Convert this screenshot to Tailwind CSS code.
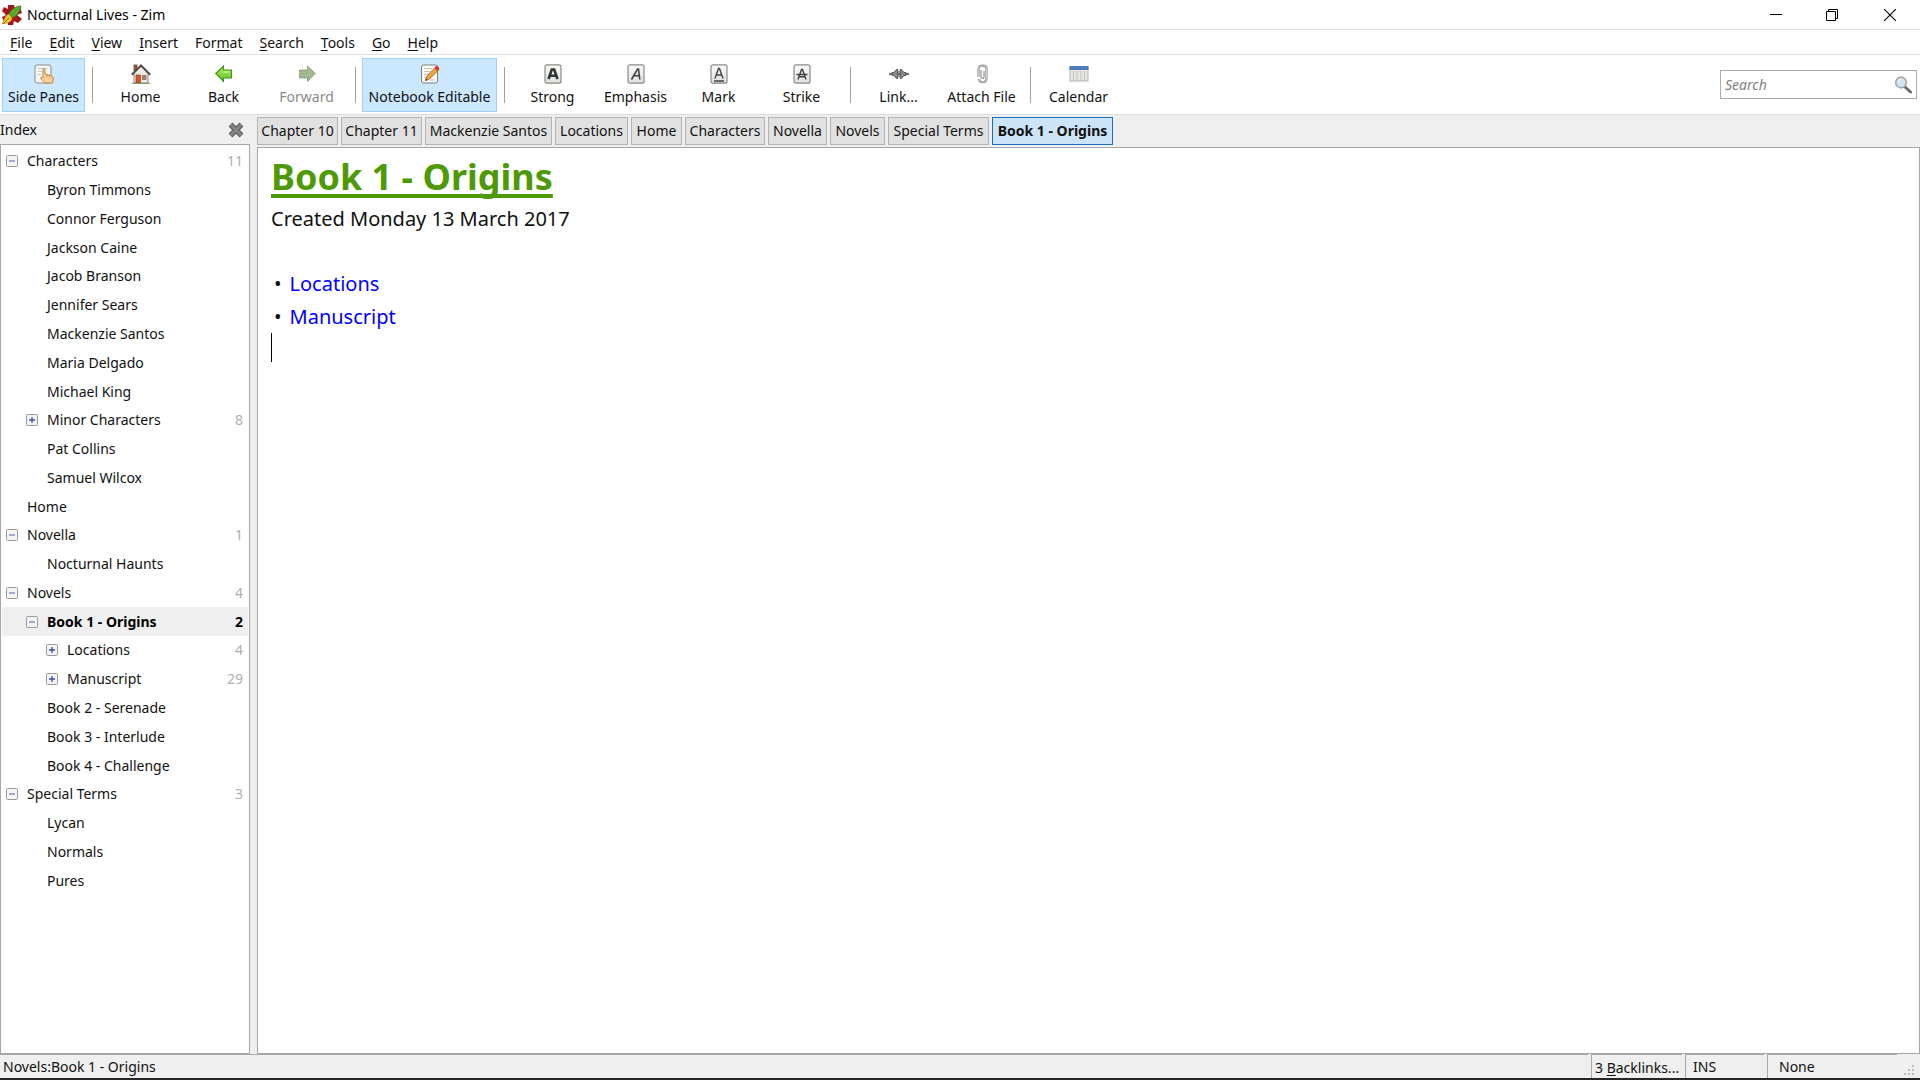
<!DOCTYPE html>
<html lang="en">
<head>
<meta charset="utf-8">
<title>Nocturnal Lives - Zim</title>
<script src="https://cdn.jsdelivr.net/npm/@tailwindcss/browser@4"></script>
</head>
<body class="h-screen flex flex-col overflow-hidden bg-[#efefef] font-['Noto_Sans','Open_Sans',sans-serif] text-sm leading-5 text-[#111]">

<svg class="absolute size-0" aria-hidden="true">
  <defs>
    <linearGradient id="key" x1="0" y1="0" x2="0" y2="1"><stop offset="0" stop-color="#fafaf8"/><stop offset="1" stop-color="#dededa"/></linearGradient>
    <linearGradient id="grn" x1="0" y1="0" x2="0" y2="1"><stop offset="0" stop-color="#b5ec72"/><stop offset="1" stop-color="#5cc01c"/></linearGradient>
    <symbol id="minus" viewBox="0 0 12 12"><rect x=".5" y=".5" width="11" height="11" rx="1" fill="#f4f4f4" stroke="#9a9a9a"/><path d="M3 6h6" stroke="#4a5fa8"/></symbol>
    <symbol id="plus" viewBox="0 0 12 12"><rect x=".5" y=".5" width="11" height="11" rx="1" fill="#f4f4f4" stroke="#9a9a9a"/><path d="M3 6h6M6 3v6" stroke="#3a50a8" stroke-width="1.300"/></symbol>
  </defs>
</svg>

<header class="h-[30px] shrink-0 flex items-center bg-white border-b border-[#dedede] pl-0.5">
  <svg class="size-5" viewBox="0 0 20 20"><path d="M6 0h6l1 4 5-2 2 6-5 2 5 4-4 4-4-2-1 4H6l0-4-4 1-2-5 4-2-4-4 2-4 4 2z" fill="#a8141c"/><path d="M19 1c-5 0-10 3-12 8l3 4c5-2 8-6 9-12z" fill="#58a82c" stroke="#33701a" stroke-width=".7"/><path d="M7 9c-3 1-4 3-5 6l-2 4 5-1c3-1 5-2 5-5z" fill="#f2c92c" stroke="#b08a10" stroke-width=".6"/><path d="M1 19l6-6" stroke="#8c6b10"/></svg>
  <h1 class="ml-[5px] text-black">Nocturnal Lives - Zim</h1>
  <div class="ml-auto flex">
    <button aria-label="Minimize" class="w-[56px] h-7 grid place-items-center"><svg class="size-3" viewBox="0 0 12 12"><path d="M0 5.5h12" stroke="#000"/></svg></button>
    <button aria-label="Restore" class="w-[56px] h-7 grid place-items-center"><svg class="size-3" viewBox="0 0 12 12" fill="none" stroke="#000"><path d="M.5 2.500h9v9h-9zM2.500 2.500v-2h9v9h-2"/></svg></button>
    <button aria-label="Close" class="w-[60px] h-7 grid place-items-center"><svg class="size-3" viewBox="0 0 12 12"><path d="M0 0l12 12M12 0L0 12" stroke="#000" stroke-width="1.100"/></svg></button>
  </div>
</header>

<nav class="h-[25px] shrink-0 flex items-center gap-[17px] bg-white border-b border-[#dedede] pl-[10px] pt-0.5">
  <button><u class="underline-offset-2">F</u>ile</button>
  <button><u class="underline-offset-2">E</u>dit</button>
  <button><u class="underline-offset-2">V</u>iew</button>
  <button><u class="underline-offset-2">I</u>nsert</button>
  <button>For<u class="underline-offset-2">m</u>at</button>
  <button><u class="underline-offset-2">S</u>earch</button>
  <button><u class="underline-offset-2">T</u>ools</button>
  <button><u class="underline-offset-2">G</u>o</button>
  <button><u class="underline-offset-2">H</u>elp</button>
</nav>

<div class="h-[60px] shrink-0 flex items-center bg-white border-b border-[#dcdcdc] pl-0.5 pr-[3px] whitespace-nowrap">
  <button class="w-[83px] h-[54px] flex flex-col items-center gap-[3px] pt-[5px] bg-[#cce8ff] border border-[#99d1ff]">
    <svg class="size-5 shrink-0" viewBox="0 0 20 20"><rect x="1" y="1" width="16" height="18" rx="2" fill="#f6f6f4" stroke="#8b8b88"/><path d="M3.500 4.500h10M3.500 7.500h5M3.500 10.500h4" stroke="#c9c9c6"/><path d="M9 5c1.500-.8 2 .2 2 1.200V10l5.500 1.500c2 .5 3 1.500 2.700 3.500l-.7 4h-7.500L7 15c-1-1.500.5-2.500 2-1.200z" fill="#f8cf9c" stroke="#c07c30" stroke-width=".9"/><path d="M13 11v2M15.500 11.500v2" stroke="#c07c30" stroke-width=".8"/></svg>
    <span>Side Panes</span></button>
  <div class="w-[14px] flex justify-center"><span class="w-px h-9 bg-[#a0a0a0]"></span></div>
  <button class="w-[83px] h-[54px] flex flex-col items-center gap-[3px] pt-1.5">
    <svg class="size-5 shrink-0" viewBox="0 0 20 20"><rect x="3" y="1" width="3" height="6" fill="#c74732" stroke="#444" stroke-width=".7"/><path d="M3 9l7-7 7 7v10H3z" fill="#ecebe6" stroke="#6b6b66" stroke-width=".8"/><path d="M.8 10.800L10 1.500l9.200 9.300" fill="none" stroke="#4d4d4d" stroke-width="2"/><rect x="5" y="11" width="4.500" height="8" fill="#d8552c" stroke="#8b2e14" stroke-width=".6"/><rect x="11.500" y="11.500" width="3.500" height="4" fill="#7a8da0" stroke="#c06030" stroke-width=".8"/><path d="M1 19.400h18" stroke="#7d9c52"/></svg>
    <span>Home</span></button>
  <button class="w-[83px] h-[54px] flex flex-col items-center gap-[3px] pt-1.5">
    <svg class="size-5 shrink-0" viewBox="0 0 20 20"><path d="M1.700 9.500L9.500 2v4h8v8h-8v3.500z" fill="url(#grn)" stroke="#3d9410" stroke-width="1.100"/><path d="M9 8h6.500" stroke="#d8f7b0"/></svg>
    <span>Back</span></button>
  <button disabled class="w-[83px] h-[54px] flex flex-col items-center gap-[3px] pt-1.5 text-[#8a8a8a]">
    <svg class="size-5 shrink-0" viewBox="0 0 20 20"><path d="M18.300 9.500L10.500 2v4h-8v8h8v3.500z" fill="#9fb890" stroke="#6f8763" stroke-dasharray="1 .6"/></svg>
    <span>Forward</span></button>
  <div class="w-[14px] flex justify-center"><span class="w-px h-9 bg-[#a0a0a0]"></span></div>
  <button class="w-[135px] h-[54px] flex flex-col items-center gap-[3px] pt-[5px] bg-[#cce8ff] border border-[#99d1ff]">
    <svg class="size-5 shrink-0" viewBox="0 0 20 20"><rect x="1.500" y="1" width="16" height="18" rx="2" fill="#f8f8f6" stroke="#7e7e7b"/><path d="M4 4.500h8M4 7.500h6M4 10.500h4M4 13.500h3M10 16h5" stroke="#c4c4c1"/><path d="M15.500 3l3 3-9 9-4 1.500L7 12z" fill="#f0a33c" stroke="#9c5c14" stroke-width=".8"/><path d="M14.500 4l1.500-1.700c1.200-1 4 1.500 3 3L17.500 7z" fill="#d6342c"/><path d="M5.200 16.800l2-.8-1.200-1.300z" fill="#222"/></svg>
    <span>Notebook Editable</span></button>
  <div class="w-[14px] flex justify-center"><span class="w-px h-9 bg-[#a0a0a0]"></span></div>
  <button class="w-[83px] h-[54px] flex flex-col items-center gap-[3px] pt-1.5">
    <svg class="size-5 shrink-0" viewBox="0 0 20 20"><rect x="2" y=".8" width="16" height="18.400" rx="2" fill="url(#key)" stroke="#8a8a86" stroke-width="1.200"/><path d="M5.500 15L8.800 5.500h2.400L14.500 15M7 11.800h6" fill="none" stroke="#2e3436" stroke-width="2.600"/></svg>
    <span>Strong</span></button>
  <button class="w-[83px] h-[54px] flex flex-col items-center gap-[3px] pt-1.5">
    <svg class="size-5 shrink-0" viewBox="0 0 20 20"><rect x="2" y=".8" width="16" height="18.400" rx="2" fill="url(#key)" stroke="#8a8a86" stroke-width="1.200"/><path d="M5.500 15.500L11.500 5h1l1.300 10.500M7.500 11.800h6" fill="none" stroke="#3e4446" stroke-width="1.600"/></svg>
    <span>Emphasis</span></button>
  <button class="w-[83px] h-[54px] flex flex-col items-center gap-[3px] pt-1.5">
    <svg class="size-5 shrink-0" viewBox="0 0 20 20"><rect x="2" y=".8" width="16" height="18.400" rx="2" fill="url(#key)" stroke="#8a8a86" stroke-width="1.200"/><path d="M6 14.500L9.500 4.500h1L14 14.500M7 11h6M5 17h10" fill="none" stroke="#3e4446" stroke-width="1.400"/></svg>
    <span>Mark</span></button>
  <button class="w-[83px] h-[54px] flex flex-col items-center gap-[3px] pt-1.5">
    <svg class="size-5 shrink-0" viewBox="0 0 20 20"><rect x="2" y=".8" width="16" height="18.400" rx="2" fill="url(#key)" stroke="#8a8a86" stroke-width="1.200"/><path d="M6 15.500L9.500 5.500h1L14 15.500M7 12.800h6M4.500 10.500h11" fill="none" stroke="#3e4446" stroke-width="1.400"/></svg>
    <span>Strike</span></button>
  <div class="w-[14px] flex justify-center"><span class="w-px h-9 bg-[#a0a0a0]"></span></div>
  <button class="w-[83px] h-[54px] flex flex-col items-center gap-[3px] pt-1.5">
    <svg class="size-5 shrink-0" viewBox="0 0 20 20"><path d="M0 10h20" stroke="#777" stroke-width="2.200"/><path d="M3 8.500h2L7.500 5.500h1.300v9H7.500L5 11.500H3zM17 8.500h-2l-2.500-3h-1.300v9h1.300l2.500-3h2z" fill="#8a8a86" stroke="#4c4c4a" stroke-width=".9"/><path d="M9 8h2M9 12h2" stroke="#666"/></svg>
    <span>Link...</span></button>
  <button class="w-[83px] h-[54px] flex flex-col items-center gap-[3px] pt-1.5">
    <svg class="size-5 shrink-0" viewBox="0 0 20 20" fill="none"><path d="M6.500 13V5c0-4.500 8-4.500 8 0v9c0 5.500-7 5.500-7.500 1" stroke="#8d8d8a" stroke-width="2.200"/><path d="M6.500 13V5c0-4.500 8-4.500 8 0v9c0 5.500-7 5.500-7.500 1" stroke="#d4d4d1" stroke-width=".9"/><path d="M9 6v7c0 2 3 2 3 0V7" stroke="#9a9a97" stroke-width="1.300"/></svg>
    <span>Attach File</span></button>
  <div class="w-[14px] flex justify-center"><span class="w-px h-9 bg-[#a0a0a0]"></span></div>
  <button class="w-[83px] h-[54px] flex flex-col items-center gap-[3px] pt-1.5">
    <svg class="size-5 shrink-0" viewBox="0 0 20 20"><rect x="1" y="3" width="18" height="14" fill="#e6e6e3" stroke="#b4b4b0"/><rect x=".5" y="2" width="19" height="4" fill="#4f7db8"/><path d="M4.500 7v10M8 7v10M12 7v10M15.500 7v10" stroke="#bdbdb9" stroke-width=".9"/></svg>
    <span>Calendar</span></button>
  <label class="ml-auto w-[197px] h-[29px] flex items-center border border-[#aaaab4] bg-white pl-1 pr-1">
    <input type="text" aria-label="Search" placeholder="Search" class="grow min-w-0 italic outline-none placeholder:text-[#808080]">
    <svg class="size-[18px] shrink-0" viewBox="0 0 18 18"><path d="M10.500 10.500l6 5.500" stroke="#6a6a68" stroke-width="3" stroke-linecap="round"/><circle cx="7" cy="6.500" r="5.300" fill="#d5e3ee" stroke="#a4a8aa" stroke-width="1.700"/><path d="M4 6c.5-2 2-2.500 3.500-2.500" stroke="#fff" fill="none"/></svg>
  </label>
</div>

<div class="grow min-h-0 flex">
  <aside class="w-[250px] shrink-0 flex flex-col">
    <div class="h-[29px] shrink-0 flex items-center justify-between pr-[6px]">
      <h2>Index</h2>
      <button aria-label="Close pane"><svg class="size-4" viewBox="0 0 16 16"><path d="M2.500 2.500l11 11M13.500 2.500l-11 11" stroke="#5f5f5d" stroke-width="5.400"/><path d="M2.500 2.500l11 11M13.500 2.500l-11 11" stroke="#858583" stroke-width="3"/></svg></button>
    </div>
    <div class="grow min-h-0 border border-[#a5a5ab] bg-white pt-[2px] px-px">
      <ul id="tree" class="grid auto-rows-fr h-[748px]"></ul>
    </div>
  </aside>

  <main class="grow min-w-0 flex flex-col pl-[7px]">
    <div class="h-8 shrink-0 flex items-start gap-[3px] pt-[2px] whitespace-nowrap">
      <button class="w-[81px] h-7 border border-[#b4b4b4] bg-[#e1e1e1]">Chapter 10</button>
      <button class="w-[81px] h-7 border border-[#b4b4b4] bg-[#e1e1e1]">Chapter 11</button>
      <button class="w-[127px] h-7 border border-[#b4b4b4] bg-[#e1e1e1]">Mackenzie Santos</button>
      <button class="w-[73px] h-7 border border-[#b4b4b4] bg-[#e1e1e1]">Locations</button>
      <button class="w-[51px] h-7 border border-[#b4b4b4] bg-[#e1e1e1]">Home</button>
      <button class="w-[80px] h-7 border border-[#b4b4b4] bg-[#e1e1e1]">Characters</button>
      <button class="w-[59px] h-7 border border-[#b4b4b4] bg-[#e1e1e1]">Novella</button>
      <button class="w-[55px] h-7 border border-[#b4b4b4] bg-[#e1e1e1]">Novels</button>
      <button class="w-[101px] h-7 border border-[#b4b4b4] bg-[#e1e1e1]">Special Terms</button>
      <button class="w-[121px] h-7 border border-[#1a6fb8] bg-[#cce4f7] font-bold">Book 1 - Origins</button>
    </div>
    <article class="grow bg-white border border-[#a5a5ab] pl-[13px] pt-[7px] text-xl leading-[33px]">
      <h2 class="mb-[3px] text-4xl leading-[44px] font-bold text-[#4e9a06] underline decoration-4 underline-offset-4 [text-decoration-skip-ink:none]">Book 1 - Origins</h2>
      <p>Created Monday 13 March 2017</p>
      <ul class="mt-8 pl-[3px]">
        <li class="flex gap-2"><span>•</span><a href="#locations" class="text-[#0000ff]">Locations</a></li>
        <li class="flex gap-2"><span>•</span><a href="#manuscript" class="text-[#0000ff]">Manuscript</a></li>
      </ul>
      <div class="w-px h-[29px] bg-black"></div>
    </article>
  </main>
</div>

<footer class="h-[26px] shrink-0 flex items-stretch border-b-2 border-[#262626] gap-[3px]">
  <div class="grow border-t border-[#a8a8a8] pl-[3px] pt-0.5">Novels:Book 1 - Origins</div>
  <button class="w-[91px] border-t border-l border-[#a8a8a8] pl-[3px] pt-0.5 text-left whitespace-nowrap">3 <u class="underline-offset-2">B</u>acklinks...</button>
  <div class="w-[79px] border-t border-l border-[#a8a8a8] pl-[7px] pt-0.5">INS</div>
  <div class="w-[130px] border-t border-l border-[#a8a8a8] pl-[11px] pt-0.5">None</div>
  <svg class="w-4 h-6 mr-1" viewBox="0 0 16 24" fill="#bcbcbc"><path d="M12 11h2v2h-2zM8 15h2v2H8zM12 15h2v2h-2zM4 19h2v2H4zM8 19h2v2H8zM12 19h2v2h-2z"/></svg>
</footer>

<script>
const pages = [
  [0, "-", "Characters", 11], [1, "", "Byron Timmons"], [1, "", "Connor Ferguson"], [1, "", "Jackson Caine"],
  [1, "", "Jacob Branson"], [1, "", "Jennifer Sears"], [1, "", "Mackenzie Santos"], [1, "", "Maria Delgado"],
  [1, "", "Michael King"], [1, "+", "Minor Characters", 8], [1, "", "Pat Collins"], [1, "", "Samuel Wilcox"],
  [0, "", "Home"], [0, "-", "Novella", 1], [1, "", "Nocturnal Haunts"], [0, "-", "Novels", 4],
  [1, "-", "Book 1 - Origins", 2], [2, "+", "Locations", 4], [2, "+", "Manuscript", 29],
  [1, "", "Book 2 - Serenade"], [1, "", "Book 3 - Interlude"], [1, "", "Book 4 - Challenge"],
  [0, "-", "Special Terms", 3], [1, "", "Lycan"], [1, "", "Normals"], [1, "", "Pures"],
];
const indent = ["pl-1", "pl-6", "pl-11"];
document.getElementById("tree").innerHTML = pages.map(([depth, mark, name, count]) => {
  const current = depth === 1 && count === 2;
  const box = mark
    ? `<button aria-label="Toggle ${name}" class="size-3 shrink-0"><svg class="size-3"><use href="#${mark === "+" ? "plus" : "minus"}"/></svg></button>`
    : `<span class="w-3 shrink-0"></span>`;
  return `<li class="flex items-center gap-[9px] pr-[5px] ${indent[depth]} ${current ? "bg-[#efefef] font-bold text-black" : ""}">${box}<span class="grow">${name}</span>` +
    (count ? `<span class="${current ? "" : "text-[#b0b0b0]"}">${count}</span>` : "") + `</li>`;
}).join("");
</script>
</body>
</html>
